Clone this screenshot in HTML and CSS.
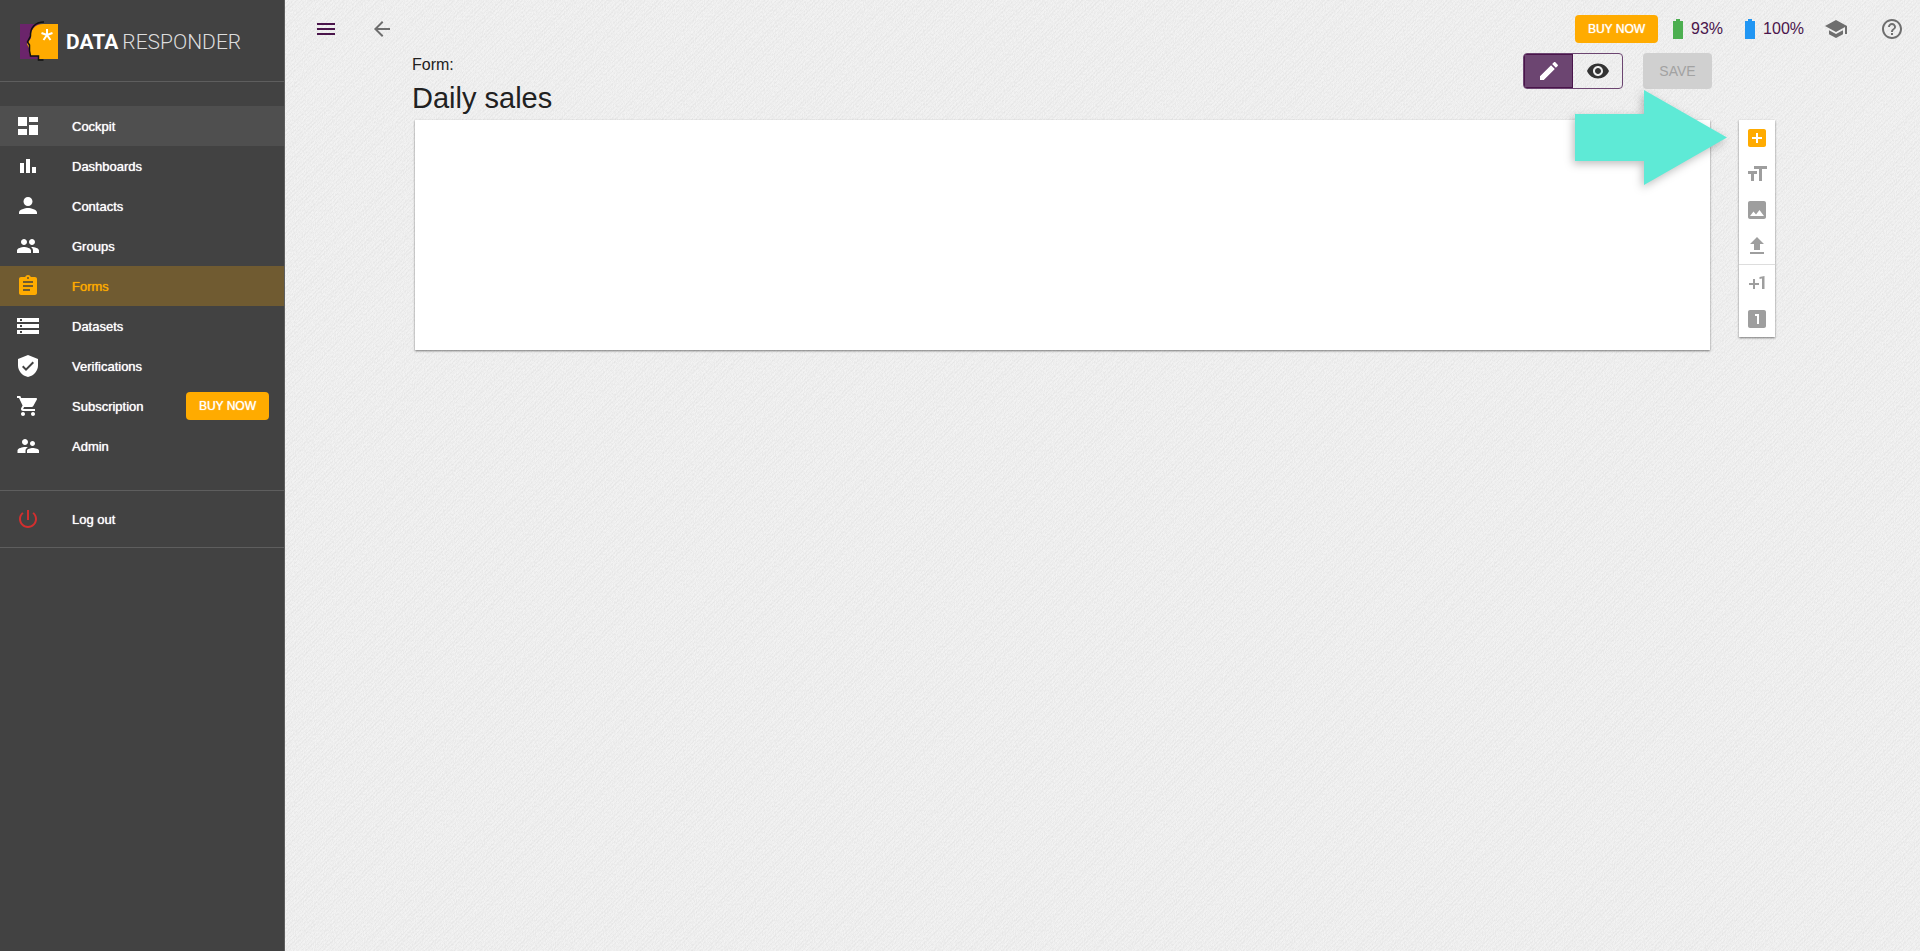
FILE: index.html
```html
<!DOCTYPE html>
<html lang="en">
<head>
    <meta charset="UTF-8">
    <meta name="viewport" content="width=device-width, initial-scale=1.0">
    <title>Data Responder</title>
    <link rel="stylesheet" href="styles.css">
</head>
<body>
    <aside class="sidebar">
        <div class="logo">
            <svg class="logo-mark" width="38" height="42" viewBox="0 0 38 42" aria-hidden="true">
                <path fill="#6b246b" d="M0 4h20v35H0z"/>
                <path fill="#ffab00" d="M38 4v35H18v-3h-8l-1-8-2-4 4-6c-1-8 4-14 12-14z"/>
                <path fill="none" stroke="#111" stroke-width="1.500" d="M24 2C15 2 10 8 10.500 16l-3 6 2 3v6l1 5h8v4h5"/>
                <path fill="none" stroke="#fff" stroke-width="2" d="M27 9v6l-5.500-2M27 15l5.500-2M27 15l-3.500 5M27 15l3.500 5"/>
            </svg>
            <span class="logo-text"><b>DATA</b><span>RESPONDER</span></span>
        </div>
        <nav class="menu">
            <a class="menu-item hovered" href="#">
                <svg class="icon" viewBox="0 0 24 24"><path d="M2 12h9V3H2v9zm0 9h9v-6H2v6zm11 0h9V11h-9v10zm0-18v5h9V3h-9z"/></svg>
                <span>Cockpit</span>
            </a>
            <a class="menu-item" href="#">
                <svg class="icon" viewBox="0 0 24 24"><path d="M4 9h4v10H4zM16 13h4v6h-4zM10 5h4v14h-4z"/></svg>
                <span>Dashboards</span>
            </a>
            <a class="menu-item" href="#">
                <svg class="icon" viewBox="0 0 24 24"><path d="M12 12c2.500 0 4.500-2 4.500-4.500S14.500 3 12 3 7.500 5 7.500 7.500 9.500 12 12 12zm0 2c-3 0-9 1.500-9 4.500V20h18v-1.500c0-3-6-4.500-9-4.500z"/></svg>
                <span>Contacts</span>
            </a>
            <a class="menu-item" href="#">
                <svg class="icon" viewBox="0 0 24 24"><path d="M16 11c1.660 0 2.990-1.340 2.990-3S17.660 5 16 5s-3 1.340-3 3 1.340 3 3 3zm-8 0c1.660 0 2.990-1.340 2.990-3S9.660 5 8 5 5 6.340 5 8s1.340 3 3 3zm0 2c-2.330 0-7 1.170-7 3.500V19h14v-2.500c0-2.330-4.670-3.500-7-3.500zm8 0c-.29 0-.62.020-.97.050 1.160.84 1.970 1.970 1.970 3.450V19h6v-2.500c0-2.330-4.670-3.500-7-3.500z"/></svg>
                <span>Groups</span>
            </a>
            <a class="menu-item active" href="#">
                <svg class="icon" viewBox="0 0 24 24"><path d="M19 3h-4.180C14.400 1.840 13.300 1 12 1s-2.400.84-2.820 2H5c-1.100 0-2 .9-2 2v14c0 1.100.9 2 2 2h14c1.100 0 2-.9 2-2V5c0-1.100-.9-2-2-2zm-7 0c.55 0 1 .45 1 1s-.45 1-1 1-1-.45-1-1 .45-1 1-1zm2 14H7v-2h7v2zm3-4H7v-2h10v2zm0-4H7V7h10v2z"/></svg>
                <span>Forms</span>
            </a>
            <a class="menu-item" href="#">
                <svg class="icon" viewBox="0 0 24 24"><path d="M1 20h22v-4H1v4zm3-3h2v2H4v-2zM1 4v4h22V4H1zm5 3H4V5h2v2zm-5 7h22v-4H1v4zm3-3h2v2H4v-2z"/></svg>
                <span>Datasets</span>
            </a>
            <a class="menu-item" href="#">
                <svg class="icon" viewBox="0 0 24 24"><path d="M12 1L2 5v6.500c0 5.300 4 10.200 10 11.500 6-1.300 10-6.200 10-11.500V5L12 1zm-2 16l-4-4 1.410-1.410L10 14.170l6.590-6.590L18 9l-8 8z"/></svg>
                <span>Verifications</span>
            </a>
            <div class="menu-row">
                <a class="menu-item" href="#">
                    <svg class="icon" viewBox="0 0 24 24"><path d="M7 18c-1.100 0-1.990.9-1.990 2S5.900 22 7 22s2-.9 2-2-.9-2-2-2zM1 2v2h2l3.600 7.590-1.350 2.450c-.16.280-.25.610-.25.960 0 1.100.9 2 2 2h12v-2H7.420c-.14 0-.25-.11-.25-.25l.03-.12.900-1.630h7.450c.75 0 1.410-.41 1.750-1.030l3.580-6.490c.08-.14.120-.31.120-.48 0-.55-.45-1-1-1H5.210l-.94-2H1zm16 16c-1.100 0-1.990.9-1.990 2s.89 2 1.990 2 2-.9 2-2-.9-2-2-2z"/></svg>
                    <span>Subscription</span>
                </a>
                <button class="buy-btn" type="button">BUY NOW</button>
            </div>
            <a class="menu-item" href="#">
                <svg class="icon" viewBox="0 0 24 24"><path d="M16.500 12c1.380 0 2.490-1.120 2.490-2.500S17.880 7 16.500 7 14 8.120 14 9.500s1.120 2.500 2.500 2.500zM9 11c1.660 0 2.990-1.340 2.990-3S10.660 5 9 5 6 6.340 6 8s1.340 3 3 3zm7.500 3c-1.830 0-5.500.92-5.500 2.750V19h12v-2.250c0-1.830-3.670-2.750-6.500-2.750zM9 13c-2.330 0-7.500 1.170-7.500 3.500V19H9.500v-2.250c0-.85.330-2.340 2.370-3.470C10.900 13.100 9.700 13 9 13z"/></svg>
                <span>Admin</span>
            </a>
        </nav>
        <div class="logout">
            <a class="menu-item" href="#">
                <svg class="icon logout-icon" viewBox="0 0 24 24"><path d="M13 3h-2v10h2V3zm4.830 2.170l-1.420 1.420C17.990 7.860 19 9.810 19 12c0 3.870-3.130 7-7 7s-7-3.130-7-7c0-2.190 1.010-4.140 2.580-5.420L6.170 5.170C4.230 6.820 3 9.260 3 12c0 4.970 4.030 9 9 9s9-4.030 9-9c0-2.740-1.230-5.180-3.170-6.830z"/></svg>
                <span>Log out</span>
            </a>
        </div>
    </aside>

    <main class="main">
        <header class="topbar">
            <button class="icon-btn menu-toggle" type="button" aria-label="Menu">
                <svg class="icon" viewBox="0 0 24 24"><path d="M3 18h18v-2H3v2zm0-5h18v-2H3v2zm0-7v2h18V6H3z"/></svg>
            </button>
            <button class="icon-btn" type="button" aria-label="Back">
                <svg class="icon" viewBox="0 0 24 24"><path d="M20 11H7.830l5.590-5.590L12 4l-8 8 8 8 1.410-1.410L7.830 13H20v-2z"/></svg>
            </button>
            <div class="status">
                <button class="buy-btn" type="button">BUY NOW</button>
                <span class="battery">
                    <svg width="10" height="20" viewBox="0 0 10 20" aria-hidden="true"><path fill="#4caf50" d="M3 0h4v2h3v18H0V2h3z"/></svg>
                    93%
                </span>
                <span class="battery">
                    <svg width="10" height="20" viewBox="0 0 10 20" aria-hidden="true"><path fill="#2196f3" d="M3 0h4v2h3v18H0V2h3z"/></svg>
                    100%
                </span>
            </div>
            <button class="icon-btn" type="button" aria-label="Academy">
                <svg class="icon" viewBox="0 0 24 24"><path d="M5 13.180v4L12 21l7-3.820v-4L12 17l-7-3.820zM12 3L1 9l11 6 9-4.910V17h2V9L12 3z"/></svg>
            </button>
            <button class="icon-btn" type="button" aria-label="Help">
                <svg class="icon" viewBox="0 0 24 24"><path d="M11 18h2v-2h-2v2zm1-16C6.480 2 2 6.480 2 12s4.480 10 10 10 10-4.480 10-10S17.520 2 12 2zm0 18c-4.410 0-8-3.590-8-8s3.590-8 8-8 8 3.590 8 8-3.590 8-8 8zm0-14c-2.210 0-4 1.790-4 4h2c0-1.100.9-2 2-2s2 .9 2 2c0 2-3 1.750-3 5h2c0-2.250 3-2.500 3-5 0-2.210-1.790-4-4-4z"/></svg>
            </button>
        </header>

        <div class="workspace">
            <section class="form-area">
                <div class="form-head">
                    <div class="form-title">
                        <p>Form:</p>
                        <h1>Daily sales</h1>
                    </div>
                    <div class="actions">
                        <div class="view-switch">
                            <button class="selected" type="button" aria-label="Edit">
                                <svg class="icon" viewBox="0 0 24 24"><path d="M3 17.250V21h3.750L17.810 9.940l-3.750-3.750L3 17.250zM20.710 7.040c.39-.39.390-1.020 0-1.410l-2.340-2.340c-.39-.39-1.020-.39-1.410 0l-1.830 1.830 3.750 3.750 1.830-1.830z"/></svg>
                            </button>
                            <button type="button" aria-label="Preview">
                                <svg class="icon" viewBox="0 0 24 24"><path d="M12 4.500C7 4.500 2.730 7.610 1 12c1.730 4.390 6 7.500 11 7.500s9.270-3.110 11-7.500c-1.730-4.390-6-7.500-11-7.500zM12 17c-2.760 0-5-2.240-5-5s2.240-5 5-5 5 2.240 5 5-2.240 5-5 5zm0-8c-1.660 0-3 1.340-3 3s1.340 3 3 3 3-1.340 3-3-1.340-3-3-3z"/></svg>
                            </button>
                        </div>
                        <button class="save-btn" type="button" disabled>SAVE</button>
                    </div>
                </div>
                <div class="canvas"></div>
                <!-- points at the add button -->
                <svg class="pointer" width="152" height="95" viewBox="0 0 152 95" aria-hidden="true"><path fill="#5eead6" d="M0 24h69V0l83 47.500L69 95V71H0z"/></svg>
            </section>

            <div class="tools">
                <button class="tool primary" type="button" aria-label="Add question">
                    <svg class="icon" viewBox="0 0 24 24"><path d="M19 3H5c-1.110 0-2 .9-2 2v14c0 1.100.89 2 2 2h14c1.100 0 2-.9 2-2V5c0-1.100-.9-2-2-2zm-2 10h-4v4h-2v-4H7v-2h4V7h2v4h4v2z"/></svg>
                </button>
                <button class="tool" type="button" aria-label="Add text">
                    <svg class="icon" viewBox="0 0 24 24"><path d="M9 4v3h5v12h3V7h5V4H9zm-6 8h3v7h3v-7h3V9H3v3z"/></svg>
                </button>
                <button class="tool" type="button" aria-label="Add image">
                    <svg class="icon" viewBox="0 0 24 24"><path d="M21 19V5c0-1.100-.9-2-2-2H5c-1.100 0-2 .9-2 2v14c0 1.100.9 2 2 2h14c1.100 0 2-.9 2-2zM8.500 13.500l2.500 3.010L14.500 12l4.500 6H5l3.500-4.500z"/></svg>
                </button>
                <button class="tool" type="button" aria-label="Upload">
                    <svg class="icon" viewBox="0 0 24 24"><path d="M9 16h6v-6h4l-7-7-7 7h4zm-4 2h14v2H5z"/></svg>
                </button>
                <button class="tool divided" type="button" aria-label="Add page">
                    <svg class="icon" viewBox="0 0 24 24"><path d="M10 8H8v4H4v2h4v4h2v-4h4v-2h-4zm4.500-1.920V7.900l2.500-.5V18h2.500V5z"/></svg>
                </button>
                <button class="tool" type="button" aria-label="Page one">
                    <svg class="icon" viewBox="0 0 24 24"><path d="M19 3H5c-1.100 0-2 .9-2 2v14c0 1.100.9 2 2 2h14c1.100 0 2-.9 2-2V5c0-1.100-.9-2-2-2zm-5 14h-2V9h-2V7h4v10z"/></svg>
                </button>
            </div>
        </div>
    </main>
</body>
</html>
```
FILE: styles.css
```css
* {
    margin: 0;
    padding: 0;
    box-sizing: border-box;
}

body {
    display: flex;
    min-height: 100vh;
    font-family: "Liberation Sans", Arial, sans-serif;
    font-size: 16px;
    color: #212121;
    background-color: #f3f3f3;
    /* woven paper: fine grain over a faint diagonal */
    background-image:
        url("data:image/svg+xml,%3Csvg xmlns='http://www.w3.org/2000/svg' width='240' height='240'%3E%3Cfilter id='n' x='0' y='0' width='100%25' height='100%25'%3E%3CfeTurbulence type='fractalNoise' baseFrequency='.9 .5' numOctaves='2' stitchTiles='stitch'/%3E%3CfeColorMatrix values='0 0 0 0 0 0 0 0 0 0 0 0 0 0 0 .09 0 0 0 -.03'/%3E%3C/filter%3E%3Crect width='240' height='240' filter='url(%23n)'/%3E%3C/svg%3E"),
        repeating-linear-gradient(135deg, rgba(0, 0, 0, 0.02) 0 1px, transparent 1px 3px);
}

button {
    font-family: inherit;
    border: none;
    background: none;
    cursor: pointer;
}

.icon {
    display: block;
    flex: none;
    width: 24px;
    height: 24px;
    fill: currentColor;
}

/* sidebar */
.sidebar {
    flex: none;
    width: 285px;
    background: #424242;
    border-right: 1px solid #5e5e5e;
    color: #fff;
}

.logo {
    display: flex;
    align-items: center;
    gap: 8px;
    height: 82px;
    padding-left: 20px;
    border-bottom: 1px solid #5e5e5e;
}

.logo-text {
    display: flex;
    gap: 4px;
    padding-top: 3px;
    font-family: Roboto, sans-serif;
    font-size: 21px;
    line-height: 24px;
}

.logo-text span {
    font-weight: 300;
    color: #ddd;
}

.menu {
    padding: 24px 0;
    border-bottom: 1px solid #5e5e5e;
}

.menu-item {
    display: flex;
    flex: 1;
    align-items: center;
    gap: 32px;
    height: 40px;
    padding-left: 16px;
    color: #fff;
    font-size: 13px;
    text-decoration: none;
    text-shadow: 0 0 1px currentColor;
}

.menu-item.hovered {
    background: #4f4f4f;
}

.menu-item.active {
    background: #705b31;
    color: #ffab00;
}

.menu-row {
    display: flex;
    align-items: center;
    padding-right: 15px;
}

.logout {
    padding: 8px 0;
    border-bottom: 1px solid #5e5e5e;
}

.logout-icon {
    fill: #d32f2f;
}

.buy-btn {
    height: 28px;
    padding: 0 13px;
    border-radius: 4px;
    background: #ffab00;
    color: #fff;
    font-size: 12px;
    text-shadow: 0 0 1px currentColor;
}

/* main column */
.main {
    flex: 1;
    min-width: 0;
}

.topbar {
    display: flex;
    align-items: center;
    height: 53px;
    padding: 5px 16px 0 29px;
    gap: 32px;
}

.icon-btn {
    color: #6e6e6e;
}

.menu-toggle {
    color: #4a154b;
}

.status {
    display: flex;
    align-items: center;
    gap: 15px;
    margin-left: auto;
    color: #4a154b;
}

.battery {
    display: flex;
    align-items: center;
    gap: 8px;
    margin-right: 7px;
}

.battery:last-child {
    margin-right: -12px;
}

.workspace {
    display: flex;
    align-items: flex-start;
    gap: 27px;
    padding: 0 145px 0 127px;
}

.form-area {
    position: relative;
    flex: 1;
    min-width: 0;
}

.form-head {
    display: flex;
    justify-content: space-between;
    align-items: flex-start;
}

.form-title p {
    line-height: 24px;
}

.form-title h1 {
    font-size: 29px;
    font-weight: 400;
    line-height: 43px;
}

.actions {
    display: flex;
    gap: 20px;
}

.view-switch {
    display: flex;
    width: 100px;
    height: 36px;
    border: 1px solid #6c4571;
    border-radius: 4px;
    overflow: hidden;
}

.view-switch button {
    display: flex;
    flex: 1;
    align-items: center;
    justify-content: center;
    color: #333;
}

.view-switch .selected {
    background: #6c4571;
    color: #fff;
    box-shadow: inset 0 0 0 1px #4a154b;
}

.save-btn {
    width: 69px;
    height: 36px;
    border-radius: 4px;
    background: #d0d0d0;
    color: #a2a2a2;
    font-size: 14px;
    cursor: default;
}

.canvas {
    min-height: 230px;
    margin: 0 2px 0 3px;
    background: #fff;
    box-shadow: 0 1px 2px rgba(0, 0, 0, 0.5);
}

.pointer {
    position: absolute;
    top: 37px;
    right: -15px;
    overflow: visible;
    filter: drop-shadow(-2px 3px 4px rgba(0, 0, 0, 0.25));
}

.tools {
    display: flex;
    flex-direction: column;
    flex: none;
    width: 36px;
    margin-top: 67px;
    background: #fff;
    box-shadow: 0 1px 2px rgba(0, 0, 0, 0.5);
}

.tool {
    padding: 6px;
    color: #9e9e9e;
}

.tool.primary {
    color: #ffab00;
}

.tool.divided {
    border-top: 1px solid #ddd;
}
```
